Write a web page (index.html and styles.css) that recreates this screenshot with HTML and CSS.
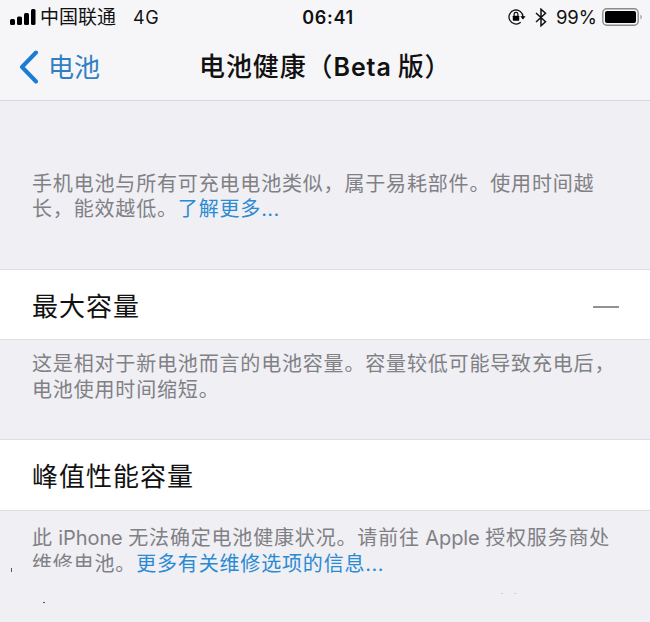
FILE: index.html
```html
<!DOCTYPE html>
<html lang="zh-CN">
<head>
<meta charset="utf-8">
<title>电池健康</title>
<link rel="stylesheet" href="styles.css">
</head>
<body>
<header class="top">
  <div class="status">
    <div class="status-left">
      <svg class="signal" width="26" height="16" viewBox="0 0 26 16"><rect x="0" y="10" width="5" height="6" rx="1.5"/><rect x="7" y="7.500" width="5" height="8.500" rx="1.500"/><rect x="14" y="4" width="5" height="12" rx="1.500"/><rect x="21" y="0" width="4.500" height="16" rx="1.500"/></svg>
      <span class="carrier">中国联通</span>
      <span class="network">4G</span>
    </div>
    <time class="clock">06:41</time>
    <div class="status-right">
      <svg class="lock" width="18" height="18" viewBox="0 0 18 18"><path d="M12.700 14.200A7 7 0 1 1 15 9" fill="none" stroke="#111" stroke-width="1.300"/><path d="M12.300 8.200h5.200L15 11.500z"/><rect x="4.800" y="7.700" width="6.400" height="5" rx=".6"/><path d="M6.100 8V6.300a1.900 1.900 0 0 1 3.800 0V8" fill="none" stroke="#111" stroke-width="1.200"/></svg>
      <svg class="bluetooth" width="12" height="19" viewBox="0 0 12 19"><path d="M1 5l9.500 8.700L6 17.800V1.200l4.500 4.100L1 14" fill="none" stroke="#111" stroke-width="1.500"/></svg>
      <span class="percent">99%</span>
      <svg class="battery" width="42" height="18" viewBox="0 0 42 18"><rect x=".8" y=".8" width="35.400" height="16.400" rx="4" fill="none" stroke="#8b8b8e" stroke-width="1.400"/><rect x="3" y="3" width="31" height="12" rx="2"/><path d="M38.500 6.500q2.500 2.500 0 5z" fill="#8b8b8e"/></svg>
    </div>
  </div>
  <nav class="nav">
    <a class="back"><svg width="20" height="34" viewBox="0 0 20 34"><path d="M17 2.500L3 17l14 14.500" fill="none" stroke="#1c7bd4" stroke-width="4" stroke-linecap="round" stroke-linejoin="round"/></svg><span>电池</span></a>
    <h1 class="title"><span>电池健康</span><span class="paren">（</span><span class="latin">Beta</span><span class="edition">版）</span></h1>
  </nav>
</header>
<main>
  <p class="note intro">手机电池与所有可充电电池类似，属于易耗部件。使用时间越<br>长，能效越低。<a>了解更多<span class="dots">...</span></a></p>
  <section class="row"><h2>最大容量</h2><span class="dash"></span></section>
  <p class="note capacity">这是相对于新电池而言的电池容量。容量较低可能导致充电后，<br>电池使用时间缩短。</p>
  <section class="row peak"><h2>峰值性能容量</h2></section>
  <p class="note service">此<span class="word"> iPhone </span>无法确定电池健康状况。请前往<span class="word"> Apple </span>授权服务商处<br><span class="cut">维修电</span>池。<a>更多有关维修选项的信息<span class="dots">...</span></a></p>
</main>
<i class="speck speck-a"></i><i class="speck speck-b"></i><i class="speck speck-c"></i><i class="speck speck-d"></i>
</body>
</html>
```
FILE: styles.css
```css
* { box-sizing: border-box; }
body {
  position: relative;
  margin: 0;
  height: 622px;
  overflow: hidden;
  background: #efeff4;
  color: #111;
  font-family: Inter, "Noto Sans CJK SC", sans-serif;
}
h1, h2, p { margin: 0; font-weight: 400; }
svg { display: block; flex: none; }
.top { height: 101px; background: #f6f6f9; border-bottom: 1px solid #d8d8dd; }
.status {
  display: grid;
  grid-template-columns: 1fr auto 1fr;
  align-items: center;
  height: 33px;
  padding: 0 6px 0 10px;
  font-size: 19px;
  line-height: 33px;
  white-space: nowrap;
}
.status-left, .status-right { display: flex; align-items: center; }
.status-right { justify-content: flex-end; }
.carrier { margin-left: 4px; padding-top: 1px; font-size: 19px; }
.network { margin-left: 17px; font-size: 18px; letter-spacing: .5px; }
.clock { padding-left: 2px; font-size: 18px; font-weight: 600; letter-spacing: .7px; }
.bluetooth { margin-left: 9px; }
.percent { margin-left: 9px; font-size: 18.500px; }
.battery { margin-left: 5px; }
.nav {
  display: grid;
  grid-template-columns: 199px 1fr;
  align-items: center;
  height: 67px;
}
.back { display: flex; align-items: center; padding-left: 19px; color: #307fc4; font-size: 26px; line-height: 40px; }
.back span { margin-left: 9px; padding-top: 2px; }
.title { display: flex; padding-top: 1px; font-size: 26px; font-weight: 500; line-height: 40px; letter-spacing: .9px; white-space: nowrap; }
.latin { font-weight: 600; font-size: 25px; }
.edition { margin-left: 6px; }
.note {
  padding-left: 32px;
  color: #808085;
  font-size: 20px;
  font-weight: 400;
  line-height: 25.500px;
  letter-spacing: .83px;
  white-space: nowrap;
}
.note a { color: #2a8ad2; }
.word { letter-spacing: -.1px; }
.dots { letter-spacing: .4px; }
.intro { height: 168px; padding-top: 70.500px; }
.row {
  display: flex;
  align-items: center;
  justify-content: space-between;
  height: 71px;
  padding: 4px 31px 0 32px;
  background: #fff;
  border-top: 1px solid #dedee2;
  border-bottom: 1px solid #dedee2;
}
.row h2 { font-size: 26px; line-height: 40px; letter-spacing: 1px; }
.dash { width: 26px; height: 2px; background: #929296; }
.capacity { height: 99px; padding-top: 12px; }
.row.peak { height: 72px; }
.service { padding-top: 15px; }
.cut { position: relative; }
.cut::after { content: ""; position: absolute; left: 0; right: 0; bottom: 0; height: 9px; background: #efeff4; }
.speck { position: absolute; width: 2px; height: 1px; background: #555; }
.speck-a { left: 11px; top: 568px; width: 1px; height: 4px; }
.speck-b { left: 43px; top: 602px; }
.speck-c { left: 501px; top: 593px; background: #ccc; }
.speck-d { left: 514px; top: 593px; background: #ccc; }
```
